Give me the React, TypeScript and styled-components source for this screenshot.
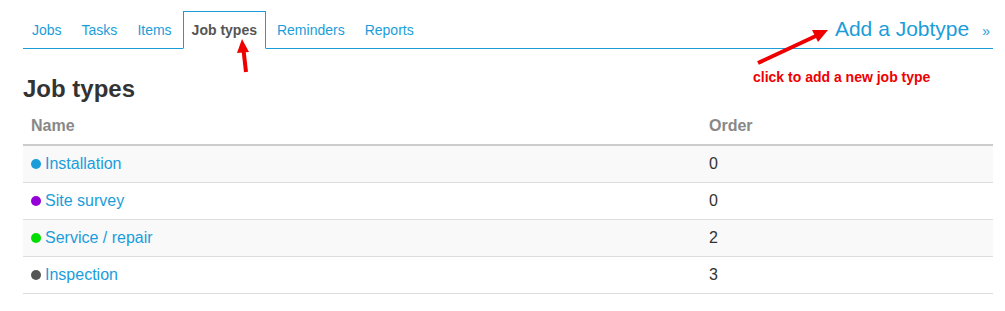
import styled, { createGlobalStyle } from "styled-components";

const Global = createGlobalStyle`
  body {
    margin: 0;
    background: #ffffff;
    font-family: "Liberation Sans", Arial, sans-serif;
    color: #333333;
  }
`;

const Page = styled.div`
  position: relative;
  width: 1005px;
  height: 311px;
  box-sizing: border-box;
  padding: 11px 12px 0 23px;
`;

const NavRow = styled.div`
  display: flex;
  align-items: flex-end;
  justify-content: space-between;
  border-bottom: 1px solid #1b9dd9;
`;

const Tabs = styled.ul`
  display: flex;
  list-style: none;
  margin: 0;
  padding: 0;
`;

const Tab = styled.li<{ $active?: boolean }>`
  margin-right: 2px;
  margin-bottom: -1px;
  padding: 8px 8px;
  line-height: 20px;
  font-size: 14px;
  border: 1px solid ${(p) => (p.$active ? "#1b9dd9" : "transparent")};
  border-bottom-color: ${(p) => (p.$active ? "#ffffff" : "transparent")};
  background: ${(p) => (p.$active ? "#ffffff" : "transparent")};
  color: ${(p) => (p.$active ? "#555555" : "#1b9dd9")};
  font-weight: ${(p) => (p.$active ? 700 : 400)};
`;

const AddLink = styled.div`
  display: flex;
  align-items: baseline;
  gap: 13px;
  align-self: center;
  padding: 0 3px 2px 0;
  color: #1b9dd9;
  font-size: 21px;
`;

const Raquo = styled.span`
  font-size: 14px;
`;

const Heading = styled.h2`
  margin: 27px 0 6px;
  font-size: 24px;
  line-height: 26px;
  font-weight: 700;
  color: #333333;
`;

const Table = styled.table`
  width: 100%;
  border-collapse: collapse;
  font-size: 16px;
`;

const Th = styled.th<{ $w?: string }>`
  text-align: left;
  padding: 8px;
  line-height: 20px;
  color: #888888;
  font-weight: 700;
  border-bottom: 2px solid #cccccc;
  width: ${(p) => p.$w ?? "auto"};
`;

const Row = styled.tr<{ $striped?: boolean }>`
  background: ${(p) => (p.$striped ? "#f9f9f9" : "#ffffff")};
`;

const Td = styled.td`
  padding: 8px;
  line-height: 20px;
  border-bottom: 1px solid #dddddd;
  color: #333333;
`;

const NameLink = styled.span`
  display: inline-flex;
  align-items: center;
  gap: 4px;
  color: #1b9dd9;
`;

const Dot = styled.span<{ $color: string }>`
  width: 10px;
  height: 10px;
  border-radius: 50%;
  background: ${(p) => p.$color};
`;

const Note = styled.div`
  position: absolute;
  left: 753px;
  top: 69px;
  color: #ee0000;
  font-size: 14px;
  font-weight: 700;
`;

const Arrows = styled.svg`
  position: absolute;
  left: 0;
  top: 0;
  pointer-events: none;
`;

const jobTypes = [
  { name: "Installation", color: "#1b9dd9", order: 0 },
  { name: "Site survey", color: "#9500d8", order: 0 },
  { name: "Service / repair", color: "#00dd00", order: 2 },
  { name: "Inspection", color: "#555555", order: 3 },
];

const tabs = ["Jobs", "Tasks", "Items", "Job types", "Reminders", "Reports"];

export default function App() {
  return (
    <>
      <Global />
      <Page>
        <NavRow>
          <Tabs>
            {tabs.map((t) => (
              <Tab key={t} $active={t === "Job types"}>
                {t}
              </Tab>
            ))}
          </Tabs>
          <AddLink>
            <span>Add a Jobtype</span>
            <Raquo>»</Raquo>
          </AddLink>
        </NavRow>
        <Heading>Job types</Heading>
        <Table>
          <thead>
            <tr>
              <Th $w="662px">Name</Th>
              <Th>Order</Th>
            </tr>
          </thead>
          <tbody>
            {jobTypes.map((j, i) => (
              <Row key={j.name} $striped={i % 2 === 0}>
                <Td>
                  <NameLink>
                    <Dot $color={j.color} />
                    {j.name}
                  </NameLink>
                </Td>
                <Td>{j.order}</Td>
              </Row>
            ))}
          </tbody>
        </Table>
        <Note>click to add a new job type</Note>
        <Arrows width="1005" height="311" viewBox="0 0 1005 311">
          <line x1="246" y1="72" x2="243.5" y2="50" stroke="#ee0000" strokeWidth="4" />
          <polygon points="242,39 237,53 249,52" fill="#ee0000" />
          <line x1="758" y1="63" x2="818" y2="35" stroke="#ee0000" strokeWidth="4" />
          <polygon points="828,30 812,30 818,42" fill="#ee0000" />
        </Arrows>
      </Page>
    </>
  );
}
